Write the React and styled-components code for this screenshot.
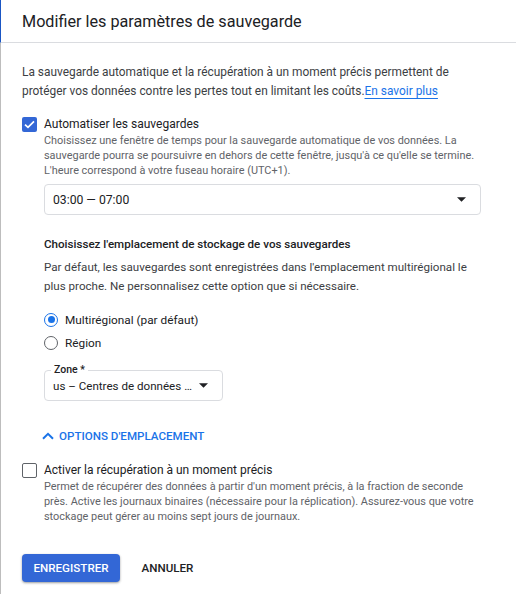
import React from "react";
import styled, { createGlobalStyle } from "styled-components";

const Global = createGlobalStyle`
  html, body { margin: 0; padding: 0; background: #fff; }
  body { font-family: Roboto, "Noto Sans", Arial, sans-serif; color: #202124; -webkit-font-smoothing: antialiased; }
  * { box-sizing: border-box; }
`;

const Frame = styled.div`
  width: 516px;
  min-height: 594px;
  display: flex;
  flex-direction: column;
`;

const Header = styled.header`
  height: 43px;
  display: flex;
  align-items: center;
  padding-left: 21px;
  border-left: 1px solid #1a56c4;
  border-bottom: 1px solid #dadce0;
`;

const Title = styled.h1`
  margin: 0;
  font-size: 16.2px;
  font-weight: 400;
  color: #202124;
`;

const Body = styled.main`
  flex: 1;
  display: flex;
  flex-direction: column;
  padding: 20px 32px 40px 21px;
  border-left: 1px solid #bdbdbd;
`;

const Para = styled.p`
  margin: ${(p) => p.$mt || 0}px 0 0;
  font-size: ${(p) => p.$size || 11.9}px;
  line-height: 19px;
  color: #3c4043;
`;

const Link = styled.a`
  color: #1a73e8;
  text-decoration: underline;
  text-underline-offset: 3px;
  text-decoration-thickness: 1px;
`;

const CheckRow = styled.div`
  margin-top: ${(p) => p.$mt}px;
  display: grid;
  grid-template-columns: 22px 1fr;
  align-items: start;
`;

const Box = styled.span`
  width: 15px;
  height: 15px;
  margin-top: 1px;
  border-radius: 2px;
  display: flex;
  align-items: center;
  justify-content: center;
  background: ${(p) => (p.$checked ? "#3367d6" : "#fff")};
  border: ${(p) => (p.$checked ? "none" : "1.5px solid #5f6368")};
`;

const CheckLabel = styled.div`
  font-size: 12px;
  line-height: 17px;
  color: #202124;
`;

const Helper = styled.div`
  font-size: 10.9px;
  line-height: 15px;
  color: #5f6368;
  width: ${(p) => p.$w || "auto"};
`;

const Indented = styled.div`
  grid-column: 2;
  display: flex;
  flex-direction: column;
  min-width: 0;
`;

const Select = styled.div`
  position: relative;
  margin-top: ${(p) => p.$mt || 0}px;
  width: ${(p) => p.$w};
  height: 31px;
  border: 1px solid #dadce0;
  border-radius: 4px;
  display: flex;
  align-items: center;
  justify-content: space-between;
  padding: 0 14px 0 8px;
  font-size: ${(p) => p.$size || 12.2}px;
  color: #202124;
  white-space: nowrap;
`;

const FloatLabel = styled.span`
  position: absolute;
  left: 6px;
  top: -8px;
  padding: 0 3px;
  background: #fff;
  font-size: 10.5px;
  font-weight: 500;
  line-height: 14px;
  color: #202124;
`;

const Caret = () => (
  <svg width="9" height="5" viewBox="0 0 10 5" aria-hidden="true">
    <path d="M0 0 L10 0 L5 5 Z" fill="#202124" />
  </svg>
);

const Heading = styled.h2`
  margin: 20px 0 0;
  font-size: 11.6px;
  line-height: 19px;
  font-weight: 500;
  color: #202124;
`;

const RadioGroup = styled.div`
  margin-top: 12px;
  display: flex;
  flex-direction: column;
`;

const RadioRow = styled.label`
  height: 23px;
  display: flex;
  align-items: center;
  gap: 7px;
  font-size: 11.8px;
  color: #202124;
`;

const RadioCircle = styled.span`
  width: 14px;
  height: 14px;
  border-radius: 50%;
  border: 1.5px solid ${(p) => (p.$on ? "#1a73e8" : "#5f6368")};
  display: flex;
  align-items: center;
  justify-content: center;
  &::after {
    content: "";
    width: 7px;
    height: 7px;
    border-radius: 50%;
    background: ${(p) => (p.$on ? "#1a73e8" : "transparent")};
  }
`;

const Toggle = styled.button`
  margin: 25px 0 0 -2px;
  align-self: flex-start;
  height: 20px;
  display: flex;
  align-items: center;
  gap: 5px;
  padding: 0;
  border: 0;
  background: none;
  font-family: inherit;
  font-size: 11.6px;
  font-weight: 500;
  color: #1a73e8;
  text-transform: uppercase;
  cursor: pointer;
`;

const Actions = styled.div`
  margin-top: 30px;
  display: flex;
  gap: 10px;
  align-items: center;
`;

const Button = styled.button`
  height: 28px;
  padding: 0 11.5px;
  border: 0;
  border-radius: 4px;
  font-family: inherit;
  font-size: 11.6px;
  font-weight: 500;
  background: ${(p) => (p.$primary ? "#3367d6" : "transparent")};
  color: ${(p) => (p.$primary ? "#fff" : "#202124")};
  box-shadow: ${(p) => (p.$primary ? "0 1px 2px rgba(60,64,67,.35), 0 1px 3px rgba(60,64,67,.2)" : "none")};
  cursor: pointer;
`;

export default function App() {
  return (
    <>
      <Global />
      <Frame>
        <Header>
          <Title>Modifier les paramètres de sauvegarde</Title>
        </Header>
        <Body>
          <Para>
            La sauvegarde automatique et la récupération à un moment précis permettent de
            protéger vos données contre les pertes tout en limitant les coûts.
            <Link href="#">En savoir plus</Link>
          </Para>

          <CheckRow $mt={15}>
            <Box $checked>
              <svg width="11" height="9" viewBox="0 0 11 9" aria-hidden="true">
                <path d="M1 4.6 L4 7.4 L10 1.3" fill="none" stroke="#fff" strokeWidth="1.7" />
              </svg>
            </Box>
            <Indented>
              <CheckLabel>Automatiser les sauvegardes</CheckLabel>
              <Helper $w="462px">
                Choisissez une fenêtre de temps pour la sauvegarde automatique de vos données. La<br />
                sauvegarde pourra se poursuivre en dehors de cette fenêtre, jusqu'à ce qu'elle se termine.
                L'heure correspond à votre fuseau horaire (UTC+1).
              </Helper>
              <Select $mt={6} $w="437px">
                <span>03:00 — 07:00</span>
                <Caret />
              </Select>

              <Heading>Choisissez l'emplacement de stockage de vos sauvegardes</Heading>
              <Para $mt={4} $size={11.6}>
                Par défaut, les sauvegardes sont enregistrées dans l'emplacement multirégional le
                plus proche. Ne personnalisez cette option que si nécessaire.
              </Para>

              <RadioGroup>
                <RadioRow>
                  <RadioCircle $on />
                  Multirégional (par défaut)
                </RadioRow>
                <RadioRow>
                  <RadioCircle />
                  Région
                </RadioRow>
              </RadioGroup>

              <Select $mt={16} $w="179px" $size={11.6}>
                <FloatLabel>Zone *</FloatLabel>
                <span>us – Centres de données …</span>
                <Caret />
              </Select>

              <Toggle>
                <svg width="12" height="8" viewBox="0 0 12 8" aria-hidden="true">
                  <path d="M1 6.8 L6 1.8 L11 6.8" fill="none" stroke="#1a73e8" strokeWidth="2" />
                </svg>
                Options d'emplacement
              </Toggle>
            </Indented>
          </CheckRow>

          <CheckRow $mt={16}>
            <Box />
            <Indented>
              <CheckLabel>Activer la récupération à un moment précis</CheckLabel>
              <Helper>
                Permet de récupérer des données à partir d'un moment précis, à la fraction de seconde
                près. Active les journaux binaires (nécessaire pour la réplication). Assurez-vous que votre
                stockage peut gérer au moins sept jours de journaux.
              </Helper>
            </Indented>
          </CheckRow>

          <Actions>
            <Button $primary>ENREGISTRER</Button>
            <Button>ANNULER</Button>
          </Actions>
        </Body>
      </Frame>
    </>
  );
}
